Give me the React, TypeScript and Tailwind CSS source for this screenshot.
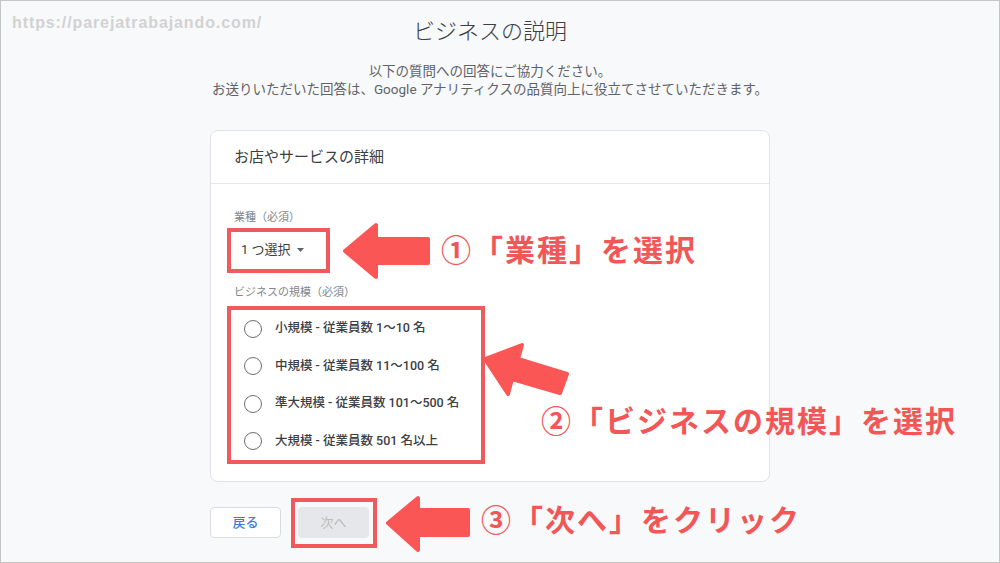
import React from 'react';

const sizes = [
  '小規模 - 従業員数 1〜10 名',
  '中規模 - 従業員数 11〜100 名',
  '準大規模 - 従業員数 101〜500 名',
  '大規模 - 従業員数 501 名以上',
];

const App: React.FC = () => {
  return (
    <div className="relative w-[1000px] h-[563px] overflow-hidden bg-[#f8f9fb] border border-[#c6c6c6] font-['Roboto','Noto_Sans_CJK_JP',sans-serif]">
      {/* watermark */}
      <div className="absolute left-[11px] top-[11px] text-[16px] leading-[22px] tracking-[0.9px] font-bold text-[#d2d2d2] font-['Liberation_Sans',sans-serif]">
        https://parejatrabajando.com/
      </div>

      <div className="ml-[209px] w-[560px] pt-[16px] flex flex-col items-center">
        <h1 className="text-[22px] leading-[30px] font-light text-[#3c4043]">ビジネスの説明</h1>
        <div className="mt-[15px] text-[13.5px] leading-[18px] text-[#5f6368] text-center whitespace-nowrap">
          <p>以下の質問への回答にご協力ください。</p>
          <p>お送りいただいた回答は、Google アナリティクスの品質向上に役立てさせていただきます。</p>
        </div>

        {/* card */}
        <div className="mt-[32px] w-full bg-white border border-[#e0e2e5] rounded-[8px]">
          <div className="h-[53px] px-[23px] flex items-center border-b border-[#e6e7ea] text-[15px] text-[#3c4043]">
            お店やサービスの詳細
          </div>
          <div className="px-[23px] pt-[27px] pb-[21px]">
            <div className="text-[11px] leading-[14px] text-[#80868b]">業種（必須）</div>
            <div className="mt-[9px] h-[32px] w-[90px] pl-[7px] flex items-center gap-[6px] text-[13px] text-[#3c4043]">
              <span>1 つ選択</span>
              <svg width="7" height="4" viewBox="0 0 7 4">
                <path d="M0 0 L7 0 L3.5 4 Z" fill="#5f6368" />
              </svg>
            </div>
            <div className="mt-[20px] text-[11px] leading-[14px] text-[#80868b]">ビジネスの規模（必須）</div>
            <div className="mt-[10px] flex flex-col">
              {sizes.map((s) => (
                <div key={s} className="h-[37.5px] pl-[10px] flex items-center gap-[13px]">
                  <span className="w-[18px] h-[18px] rounded-full border-[1.5px] border-[#6b6f74]" />
                  <span className="text-[12.5px] font-medium text-[#3c4043]">{s}</span>
                </div>
              ))}
            </div>
          </div>
        </div>

        {/* buttons */}
        <div className="self-stretch mt-[25px] flex items-center gap-[17px]">
          <button className="w-[71px] h-[31px] bg-white border border-[#dadce0] rounded-[4px] text-[13px] font-medium text-[#3b78e7]">
            戻る
          </button>
          <button className="w-[71px] h-[31px] bg-[#e6e7ea] rounded-[4px] text-[13px] text-[#b9bcc0]">
            次へ
          </button>
        </div>
      </div>

      {/* red highlight boxes */}
      <div className="absolute left-[226px] top-[227px] w-[103px] h-[45px] border-4 border-[#f15a5c]" />
      <div className="absolute left-[226px] top-[305px] w-[258px] h-[158px] border-4 border-[#f15a5c]" />
      <div className="absolute left-[290px] top-[497px] w-[86px] h-[50px] border-4 border-[#f15a5c]" />

      {/* arrows */}
      <svg className="absolute left-0 top-0 pointer-events-none" width="1000" height="563" viewBox="0 0 1000 563">
        <g fill="#fb5656" stroke="#fb5656" strokeWidth="4" strokeLinejoin="round">
          <polygon points="344,250 375,224 375,238 427,238 427,262 375,262 375,276" />
          <polygon points="484,358 521,344 517,358 566,373 559,392 511,378 507,393" />
          <polygon points="387,522 417,497 417,509 467,509 467,534 417,534 417,549" />
        </g>
      </svg>

      {/* annotation labels */}
      <div className="absolute left-[440px] top-[234px] text-[30px] leading-[32px] tracking-[2px] font-bold text-[#f15757] whitespace-nowrap">
        ①「業種」を選択
      </div>
      <div className="absolute left-[540px] top-[405px] text-[30px] leading-[32px] tracking-[2px] font-bold text-[#f15757] whitespace-nowrap">
        ②「ビジネスの規模」を選択
      </div>
      <div className="absolute left-[480px] top-[504px] text-[30px] leading-[32px] tracking-[2px] font-bold text-[#f15757] whitespace-nowrap">
        ③「次へ」をクリック
      </div>
    </div>
  );
};

export default App;
